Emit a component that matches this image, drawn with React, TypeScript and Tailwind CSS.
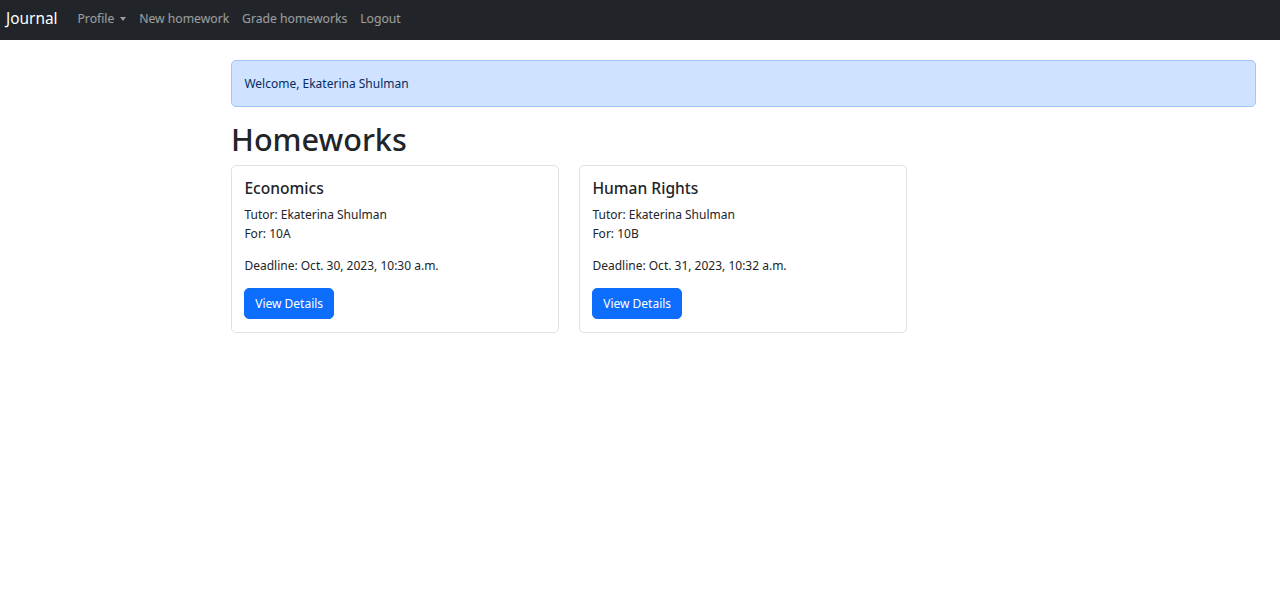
import React from "react";

interface Homework {
  title: string;
  tutor: string;
  group: string;
  deadline: string;
}

const homeworks: Homework[] = [
  {
    title: "Economics",
    tutor: "Ekaterina Shulman",
    group: "10A",
    deadline: "Oct. 30, 2023, 10:30 a.m.",
  },
  {
    title: "Human Rights",
    tutor: "Ekaterina Shulman",
    group: "10B",
    deadline: "Oct. 31, 2023, 10:32 a.m.",
  },
];

const HomeworkCard: React.FC<{ hw: Homework }> = ({ hw }) => (
  <div className="w-[328px] rounded-[5px] border border-[#dee2e6] bg-white px-[12.4px] py-[12.8px]">
    <h5 className="mb-[6.4px] text-[15.6px] font-medium leading-[19.2px]">{hw.title}</h5>
    <p className="mb-[12.8px]">
      Tutor: {hw.tutor}
      <br />
      For: {hw.group}
    </p>
    <p className="mb-[12.8px]">Deadline: {hw.deadline}</p>
    <a
      href="#"
      className="inline-block rounded-[5px] border border-[#0d6efd] bg-[#0d6efd] px-[9.8px] py-[4.8px] text-white"
    >
      View Details
    </a>
  </div>
);

export default function App() {
  return (
    <div className="min-h-[607px] bg-white text-[12px] leading-[19.2px] text-[#212529] [font-family:'Noto_Sans',sans-serif]">
      {/* Navbar */}
      <nav className="flex h-[40px] items-center bg-[#212529] pl-[6px] pb-[2px]">
        <a href="#" className="mr-[13.6px] text-[15.4px] text-white">
          Journal
        </a>
        <ul className="flex items-center text-[12.2px]">
          <li>
            <a href="#" className="flex items-center px-[6.4px] text-white/55">
              Profile
              <span className="ml-[6px] inline-block h-0 w-0 border-x-[3.5px] border-t-[4px] border-x-transparent border-t-white/55" />
            </a>
          </li>
          <li>
            <a href="#" className="block px-[6.4px] text-white/55">
              New homework
            </a>
          </li>
          <li>
            <a href="#" className="block px-[6.4px] text-white/55">
              Grade homeworks
            </a>
          </li>
          <li>
            <a href="#" className="block px-[6.4px] text-white/55">
              Logout
            </a>
          </li>
        </ul>
      </nav>

      {/* Content */}
      <main className="pl-[231px] pr-[24px] pt-[20px]">
        <div className="mb-[12.8px] rounded-[5px] border border-[#9ec5fe] bg-[#cfe2ff] px-[12.4px] py-[12.8px] text-[#052c65]">
          Welcome, Ekaterina Shulman
        </div>
        <h1 className="mb-[7.4px] text-[30.6px] font-medium leading-[38.4px]">Homeworks</h1>
        <div className="flex gap-[20px]">
          {homeworks.map((hw) => (
            <HomeworkCard key={hw.title} hw={hw} />
          ))}
        </div>
      </main>
    </div>
  );
}
